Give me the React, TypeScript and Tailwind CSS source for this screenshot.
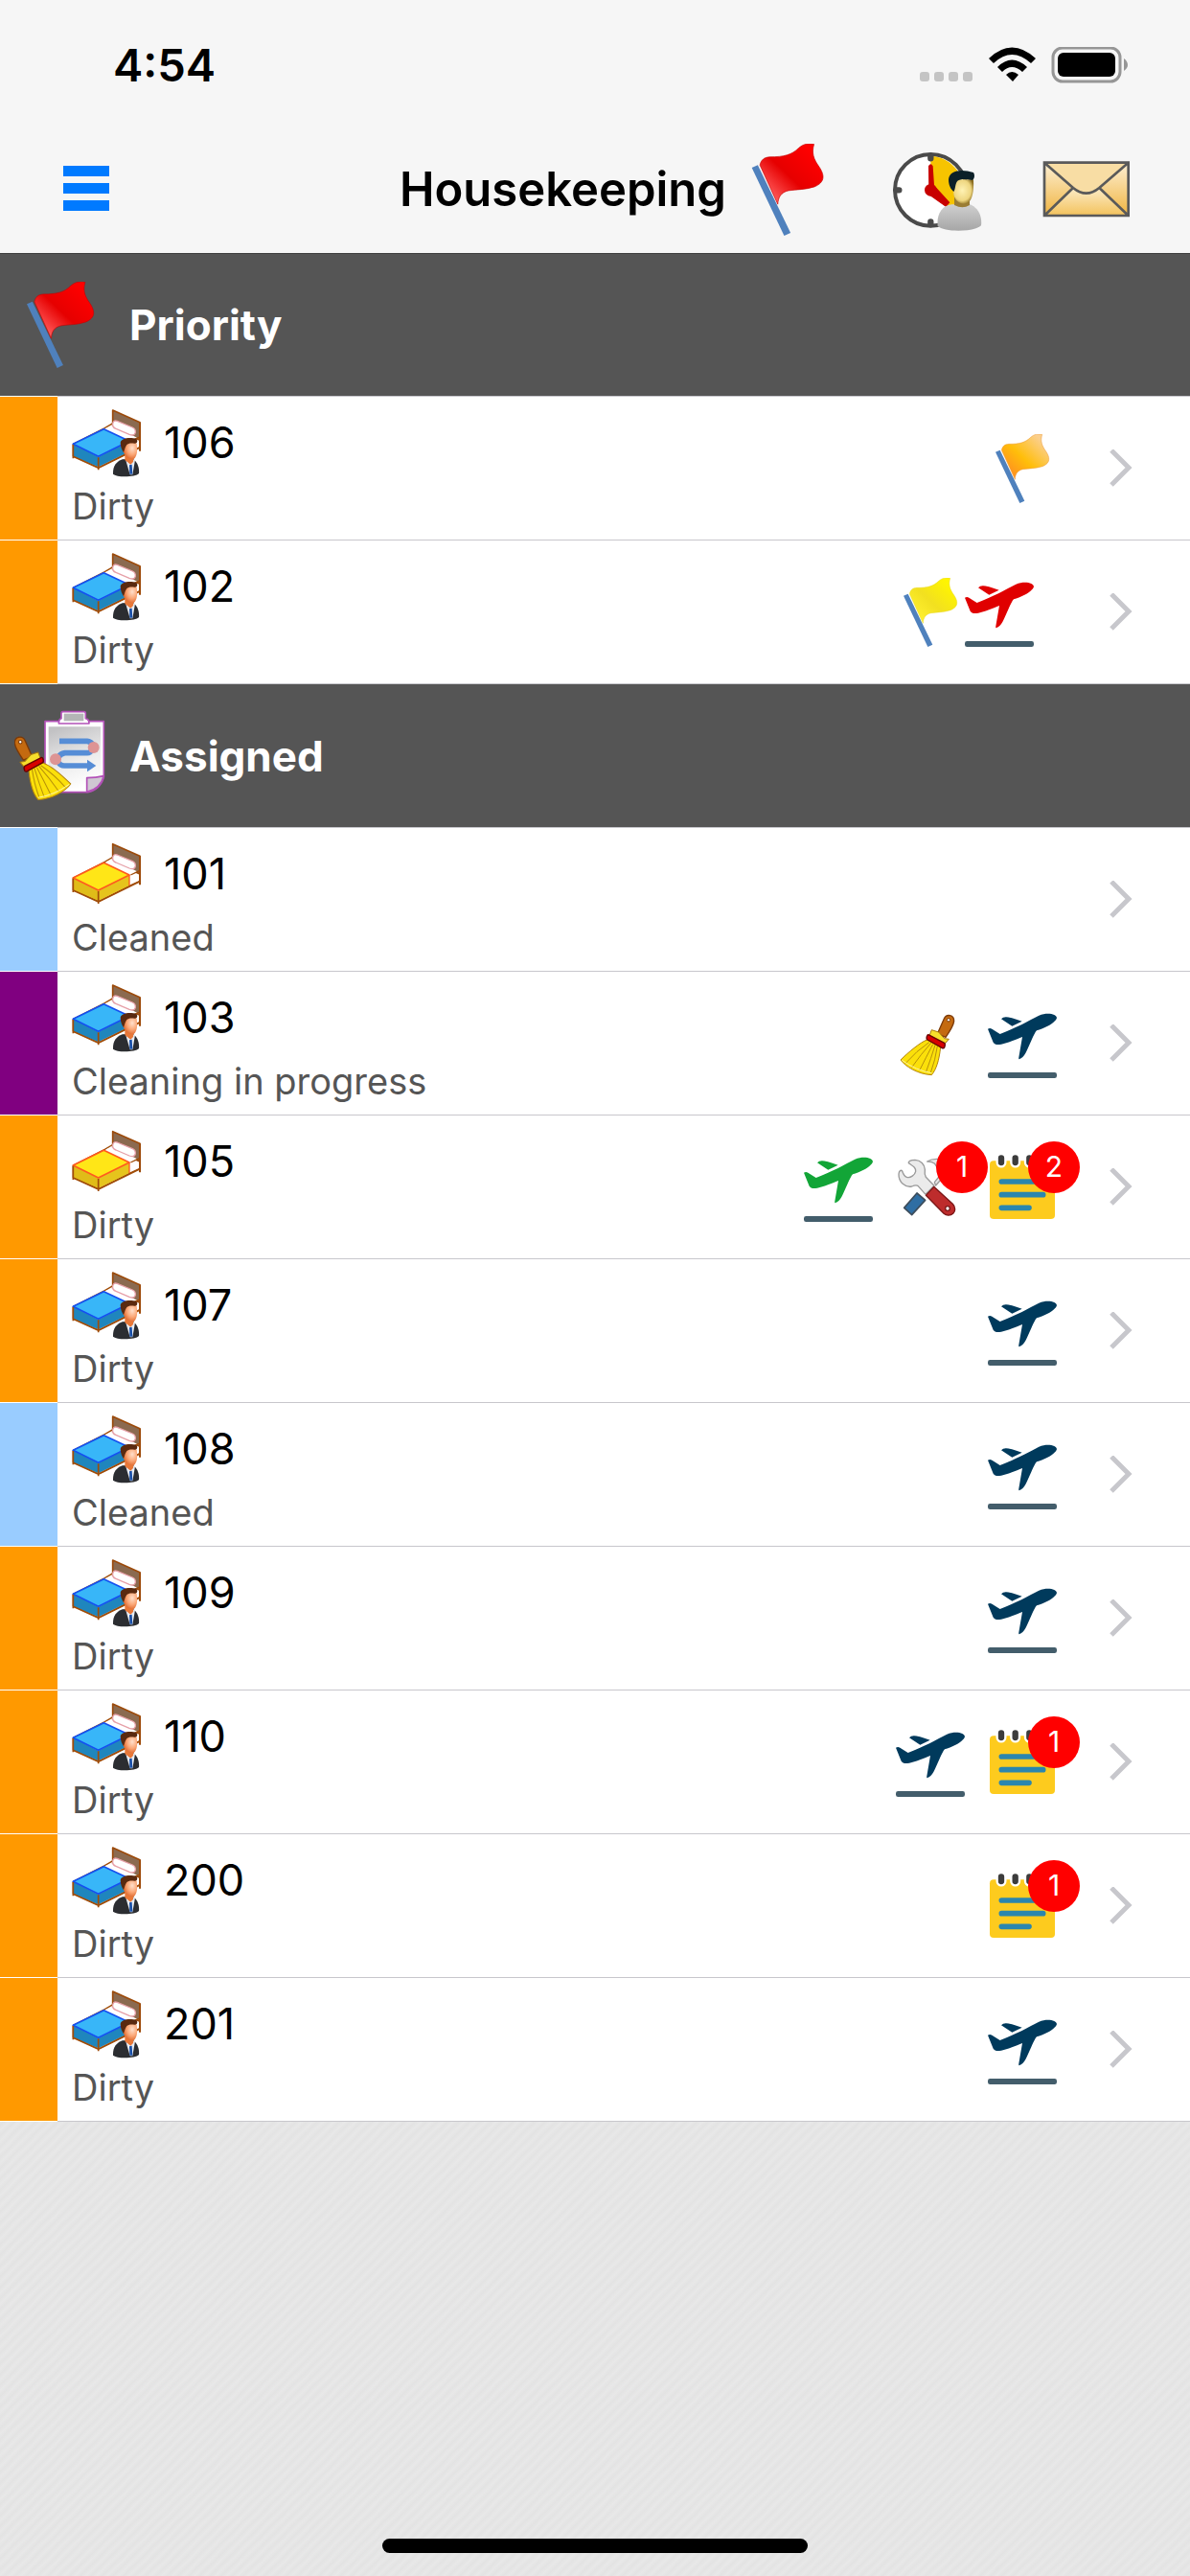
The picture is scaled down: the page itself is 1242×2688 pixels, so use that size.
import type { ReactNode } from 'react';

type FlagColor = 'red' | 'orange' | 'yellow';
type PlaneColor = 'navy' | 'red' | 'green';

type Marker =
  | { kind: 'flag'; color: FlagColor }
  | { kind: 'plane'; color: PlaneColor }
  | { kind: 'broom' }
  | { kind: 'tools'; count: number }
  | { kind: 'note'; count: number };

type Status = 'Dirty' | 'Cleaned' | 'Cleaning in progress';

interface Room {
  number: string;
  status: Status;
  occupied: boolean;
  markers: Marker[];
}

const STATUS_COLORS: Record<Status, string> = {
  Dirty: 'bg-[#ff9900]',
  Cleaned: 'bg-[#99ccff]',
  'Cleaning in progress': 'bg-[#800080]',
};

const priorityRooms: Room[] = [
  { number: '106', status: 'Dirty', occupied: true, markers: [{ kind: 'flag', color: 'orange' }] },
  {
    number: '102',
    status: 'Dirty',
    occupied: true,
    markers: [
      { kind: 'flag', color: 'yellow' },
      { kind: 'plane', color: 'red' },
    ],
  },
];

const assignedRooms: Room[] = [
  { number: '101', status: 'Cleaned', occupied: false, markers: [] },
  {
    number: '103',
    status: 'Cleaning in progress',
    occupied: true,
    markers: [{ kind: 'broom' }, { kind: 'plane', color: 'navy' }],
  },
  {
    number: '105',
    status: 'Dirty',
    occupied: false,
    markers: [
      { kind: 'plane', color: 'green' },
      { kind: 'tools', count: 1 },
      { kind: 'note', count: 2 },
    ],
  },
  { number: '107', status: 'Dirty', occupied: true, markers: [{ kind: 'plane', color: 'navy' }] },
  { number: '108', status: 'Cleaned', occupied: true, markers: [{ kind: 'plane', color: 'navy' }] },
  { number: '109', status: 'Dirty', occupied: true, markers: [{ kind: 'plane', color: 'navy' }] },
  {
    number: '110',
    status: 'Dirty',
    occupied: true,
    markers: [
      { kind: 'plane', color: 'navy' },
      { kind: 'note', count: 1 },
    ],
  },
  { number: '200', status: 'Dirty', occupied: true, markers: [{ kind: 'note', count: 1 }] },
  { number: '201', status: 'Dirty', occupied: true, markers: [{ kind: 'plane', color: 'navy' }] },
];

const FLAG_STOPS: Record<FlagColor, [string, string, string, string]> = {
  red: ['#ff5a5a', '#e60000', '#ff0000', '#c80000'],
  orange: ['#ff9020', '#ffbe0a', '#fbcf8c', '#eb9a3c'],
  yellow: ['#fff030', '#f2e020', '#fff500', '#e8d820'],
};

function FlagIcon({ color, className }: { color: FlagColor; className: string }) {
  const [from, mid, to, edge] = FLAG_STOPS[color];
  return (
    <svg viewBox="0 0 216 216" className={className} aria-hidden="true">
      <defs>
        <linearGradient id={`flag-${color}`} x1="0.1" y1="0.8" x2="0.8" y2="0.1">
          <stop offset="0" stopColor={from} />
          <stop offset="0.45" stopColor={mid} />
          <stop offset="1" stopColor={to} />
        </linearGradient>
      </defs>
      <path
        d="M43 50C46 38 52 32 66 31C100 31 118 26 134 10C146 0 155 -1 170 1C164 22 169 36 182 54C194 72 198 90 171 101C150 108 130 107 110 110C92 114 86 126 85 142Z"
        fill={`url(#flag-${color})`}
        stroke={edge}
        strokeWidth="1.5"
      />
      <path d="M24 56L38 50L115 209L100 216Z" fill="#4f81bd" />
    </svg>
  );
}

const PLANE_FILLS: Record<PlaneColor, string> = {
  navy: '#003a5c',
  red: '#e00000',
  green: '#12a537',
};

function PlaneIcon({ color }: { color: PlaneColor }) {
  return (
    <svg viewBox="0 0 216 216" className="size-[72px]" aria-hidden="true">
      <g fill={PLANE_FILLS[color]}>
        <path d="M0 62C5 59 9 60 13 62L38 78C90 58 125 38 160 20C178 13 196 13 208 18C218 23 218 30 210 37C200 49 174 61 153 67C144 76 130 116 118 138C112 149 107 153 98 157Q96 156 97 151L108 87C82 98 64 105 42 110C30 112 22 112 17 104Z" />
        <path d="M42 31Q47 25 56 25Q66 24 107 38L76 53Z" />
      </g>
      <rect y="198" width="216" height="18" rx="7" fill="#435d6b" />
    </svg>
  );
}

function BroomShape() {
  return (
    <g strokeLinejoin="round">
      <path
        d="M130 77L151 30C158 14 183 16 182 38C181 46 170 68 156 88Z"
        fill="#c46a10"
        stroke="#7c3a08"
        strokeWidth="4"
      />
      <circle cx="165" cy="34" r="5" fill="#fff" stroke="#7c3a08" strokeWidth="3" />
      <path d="M112 65L134 72L152 92L166 94L150 112L104 86Z" fill="#f7de2c" stroke="#a8780c" strokeWidth="3" />
      <path
        d="M98 96C76 104 38 136 15 159C30 180 70 204 112 206C126 190 136 160 140 118Z"
        fill="#fbe00a"
        stroke="#b5850c"
        strokeWidth="3"
      />
      <path
        d="M104 104Q65 130 30 170M110 106Q78 142 50 182M116 110Q95 150 74 192M123 112Q110 155 94 198M130 116Q124 158 108 202"
        fill="none"
        stroke="#b8920a"
        strokeWidth="3"
      />
      <path d="M19 160Q64 192 112 200" fill="none" stroke="#fff6a0" strokeWidth="3" />
      <path d="M98 83Q100 78 106 82L152 106Q156 110 152 120Q149 124 144 121L99 96Q94 92 98 83Z" fill="#d80000" stroke="#660000" strokeWidth="4" />
    </g>
  );
}

function BroomIcon() {
  return (
    <svg viewBox="0 0 216 216" className="size-[72px]" aria-hidden="true">
      <BroomShape />
    </svg>
  );
}

function ToolsIcon() {
  return (
    <svg viewBox="0 0 216 216" className="size-[72px]" aria-hidden="true">
      <g strokeLinejoin="round">
        <path d="M98 27Q114 17 140 20L170 50L125 102L121 92L142 66L122 34Q112 26 98 27Z" fill="#e8e8e8" stroke="#9a9a9a" strokeWidth="4" />
        <path d="M66 126L92 148L50 194L26 172Z" fill="#2f6ea3" stroke="#3d4d5c" strokeWidth="5" />
        <path
          d="M40 32C38 27 46 22 60 22C78 23 90 36 91 52Q89 66 94 76L120 103L93 130L69 103Q62 100 50 105C30 109 8 92 9 66C10 56 16 52 20 57C23 66 26 74 34 76C46 80 60 68 62 58C63 46 54 42 40 32Z"
          fill="#ebebeb"
          stroke="#9a9a9a"
          strokeWidth="4"
        />
        <path d="M119 106L178 160C188 170 186 184 180 189C171 198 158 197 150 190L94 133Z" fill="#bd2c2c" stroke="#7a1616" strokeWidth="4" />
        <circle cx="162" cy="174" r="7" fill="#fff" stroke="#7a1616" strokeWidth="4" />
      </g>
    </svg>
  );
}

function NoteIcon() {
  return (
    <svg viewBox="0 0 216 216" className="size-[72px]" aria-hidden="true">
      <rect x="6" y="25" width="204" height="182" rx="12" fill="#fdcb1e" />
      {[42, 86, 130, 174].map((x) => (
        <rect key={x} x={x - 13} y="3" width="26" height="40" rx="13" fill="#3c3c3c" stroke="#fff" strokeWidth="7" />
      ))}
      <path d="M43 90H173M43 131H173M43 172H129" stroke="#2b86ae" strokeWidth="17" strokeLinecap="round" />
    </svg>
  );
}

function BedIcon({ occupied }: { occupied: boolean }) {
  const colors = occupied
    ? { top: '#38b6f8', left: '#1f86bd', right: '#1f86bd', edge: '#1450f0' }
    : { top: '#ffe617', left: '#e0bc18', right: '#e6c41c', edge: '#ff5a1e' };
  return (
    <svg viewBox="0 0 216 216" className="size-[72px]" aria-hidden="true">
      <g transform={occupied ? undefined : 'translate(0 8)'} strokeLinejoin="round">
        <path d="M103 62L130 46L213 84V122L180 137L84 186L4 150V112Z" fill="#fff" stroke="#a04c08" strokeWidth="4" />
        <path d="M128 6L213 44V100L128 62Z" fill="#8b6a50" stroke="#9c4a0a" strokeWidth="5" />
        <path d="M213 44V134" stroke="#9c4a0a" strokeWidth="6" />
        <path d="M106 62L130 54L204 92L180 103Z" fill="#fff" />
        <path
          d="M142 40Q130 36 128 48Q126 60 138 64L180 82Q196 88 199 76Q200 64 190 60Z"
          fill="#fff"
          stroke="#e6a0a8"
          strokeWidth="4"
        />
        <path d="M4 112L83 152V184L4 150Z" fill={colors.left} />
        <path d="M83 152L180 103V136L83 184Z" fill={colors.right} />
        <path d="M4 112L100 65L180 103L83 151Z" fill={colors.top} stroke={colors.edge} strokeWidth="5" />
        <path d="M180 103V136" stroke={colors.edge} strokeWidth="4" />
        <path d="M184 103L212 90" stroke="#a04c08" strokeWidth="4" />
        <path d="M4 114V157M83 154V193M4 151L83 187L213 123" fill="none" stroke="#a04c08" strokeWidth="5" />
      </g>
      {occupied && <GuestShape />}
    </svg>
  );
}

function GuestShape() {
  return (
    <g>
      <defs>
        <radialGradient id="guest-face" cx="0.65" cy="0.4" r="0.7">
          <stop offset="0" stopColor="#ffe0cc" />
          <stop offset="0.5" stopColor="#fba878" />
          <stop offset="1" stopColor="#d85a1c" />
        </radialGradient>
      </defs>
      <path d="M129 206C128 182 138 168 158 160L190 158C204 166 212 184 210 204C200 216 140 217 129 206Z" fill="#2b2d31" />
      <path d="M168 160L198 162L190 208H182Z" fill="#e8eef6" />
      <path d="M180 178L188 176L190 206L181 206Z" fill="#1a50a8" />
      <path d="M166 140L194 150L192 168L184 176L166 162Z" fill="#e87838" />
      <path d="M160 108C176 98 200 100 203 112C206 130 205 150 194 159C178 162 166 148 160 134Z" fill="url(#guest-face)" />
      <path d="M152 108C154 92 184 90 202 96C208 101 204 112 196 110C184 108 176 110 172 114C166 122 166 128 162 138C156 130 153 122 152 108Z" fill="#5a2a10" />
    </g>
  );
}

function ClipboardIcon() {
  return (
    <svg viewBox="0 0 288 288" className="size-24" aria-hidden="true">
      <defs>
        <linearGradient id="clipboard-paper" x1="0.3" y1="0" x2="0.6" y2="1">
          <stop offset="0" stopColor="#c2c2c4" />
          <stop offset="0.6" stopColor="#eeeeee" />
          <stop offset="1" stopColor="#ffffff" />
        </linearGradient>
      </defs>
      <g strokeLinejoin="round">
        <path d="M96 35H280V210Q268 250 230 257H96Z" fill="#fff" stroke="#b351b8" strokeWidth="5" />
        <path d="M107 52H270V206L227 212V247H107Z" fill="url(#clipboard-paper)" />
        <path d="M227 256V212Q256 212 280 206Q270 246 227 256Z" fill="#cfc8d2" stroke="#b351b8" strokeWidth="5" />
        <path d="M147 10Q147 5 152 5H218Q223 5 223 10V26Q234 28 234 42H139Q139 28 147 26Z" fill="#fff" stroke="#b351b8" strokeWidth="5" />
        <path d="M155 11H217V34H155Z" fill="#b4b6b6" />
        <path
          d="M141 97H228Q240 98 250 112M240 126Q238 134 228 134H158Q144 136 136 150M138 164Q144 174 156 174H232"
          fill="none"
          stroke="#568dd6"
          strokeWidth="17"
        />
        <path d="M228 155L256 174L228 193Z" fill="#568dd6" />
        <circle cx="248" cy="117" r="18" fill="#dd9494" />
        <circle cx="129" cy="154" r="18" fill="#dd9494" />
      </g>
      <g transform="translate(192 64) scale(-1.05 1.05)">
        <BroomShape />
      </g>
    </svg>
  );
}

function ClockPersonIcon() {
  return (
    <svg viewBox="0 0 288 288" className="size-24" aria-hidden="true">
      <defs>
        <linearGradient id="shirt" x1="0" y1="0" x2="0" y2="1">
          <stop offset="0" stopColor="#cfcfcf" />
          <stop offset="1" stopColor="#a6a6a6" />
        </linearGradient>
        <radialGradient id="clerk-face" cx="0.45" cy="0.45" r="0.6">
          <stop offset="0" stopColor="#fff2b4" />
          <stop offset="0.7" stopColor="#eed680" />
          <stop offset="1" stopColor="#8a6c20" />
        </radialGradient>
      </defs>
      <circle cx="124" cy="145" r="112" fill="#fff" stroke="#4a4a4a" strokeWidth="12" />
      <path d="M124 145V38C160 40 190 58 208 84L214 214C206 214 200 218 196 216Z" fill="#f7c400" />
      <path d="M124 38V46M17 145H25M124 244V252" stroke="#4a4a4a" strokeWidth="19" strokeLinecap="round" />
      <path d="M117 70Q124 58 131 70L135 130L184 184L172 198L118 160Z" fill="#c80000" />
      <circle cx="124" cy="145" r="19" fill="#c80000" />
      <path d="M146 258C142 222 158 194 190 190H246C272 198 286 226 282 256C264 276 166 278 146 258Z" fill="url(#shirt)" />
      <path d="M198 168L246 174V192Q224 206 198 192Z" fill="#9a7c34" />
      <path d="M194 112H258C260 150 254 176 240 186C222 192 202 184 196 160Z" fill="url(#clerk-face)" />
      <path d="M180 112C182 82 222 78 258 90C264 100 260 112 254 114C236 110 216 110 208 116C200 126 202 142 196 150C186 142 180 128 180 112Z" fill="#0c2028" />
    </svg>
  );
}

function EnvelopeIcon() {
  return (
    <svg viewBox="0 0 288 288" className="size-24" aria-hidden="true">
      <defs>
        <linearGradient id="envelope" x1="0" y1="0" x2="0" y2="1">
          <stop offset="0" stopColor="#fdf0d4" />
          <stop offset="1" stopColor="#f0b440" />
        </linearGradient>
        <linearGradient id="envelope-front" x1="0" y1="0" x2="0" y2="1">
          <stop offset="0" stopColor="#fcecc8" />
          <stop offset="1" stopColor="#f3c25c" />
        </linearGradient>
      </defs>
      <path d="M12 59H275V225H12Z" fill="url(#envelope)" />
      <path d="M12 225L102 138H184L275 225Z" fill="url(#envelope-front)" />
      <path d="M12 59L102 138Q143 172 184 138L275 59Z" fill="#f8dda4" />
      <path
        d="M12 59H275V225H12ZL102 138Q143 172 184 138L275 59M12 225L102 138M275 225L184 138"
        fill="none"
        stroke="#5a5a5a"
        strokeWidth="8"
      />
    </svg>
  );
}

function Badge({ count, children }: { count: number; children: ReactNode }) {
  return (
    <div className="relative">
      {children}
      <span className="absolute -top-3 -right-6 flex size-[54px] items-center justify-center rounded-full bg-[#ff0000] text-[30px] text-white">
        {count}
      </span>
    </div>
  );
}

function MarkerIcon({ marker }: { marker: Marker }) {
  switch (marker.kind) {
    case 'flag':
      return <FlagIcon color={marker.color} className="size-[72px]" />;
    case 'plane':
      return <PlaneIcon color={marker.color} />;
    case 'broom':
      return <BroomIcon />;
    case 'tools':
      return (
        <Badge count={marker.count}>
          <ToolsIcon />
        </Badge>
      );
    case 'note':
      return (
        <Badge count={marker.count}>
          <NoteIcon />
        </Badge>
      );
  }
}

function RoomRow({ room }: { room: Room }) {
  // a flag sits directly against the icon that follows it
  const flagged = room.markers.length > 1 && room.markers[0].kind === 'flag';

  return (
    <li>
      <a href={`#room-${room.number}`} className="flex h-[150px] bg-white">
        <span className={`h-[149px] w-[60px] shrink-0 ${STATUS_COLORS[room.status]}`} />
        <span className="flex flex-1 items-center border-b border-[#c8c7cc] pr-[60px] pl-[15px]">
          <span className="flex flex-1 flex-col self-stretch pt-3">
            <span className="flex items-center gap-6">
              <BedIcon occupied={room.occupied} />
              <span className="text-[45px] leading-[72px] text-black">{room.number}</span>
            </span>
            <span className="text-[38px] leading-[60px] text-[#555555]">{room.status}</span>
          </span>
          <span className={flagged ? 'flex pr-6' : 'flex gap-6'}>
            {room.markers.map((marker, idx) => (
              <MarkerIcon key={idx} marker={marker} />
            ))}
          </span>
          <svg viewBox="0 0 24 40" className="ml-[55px] h-10 w-6" aria-hidden="true">
            <path d="M2 1L20 19L2 37" fill="none" stroke="#c7c7cc" strokeWidth="5" />
          </svg>
        </span>
      </a>
    </li>
  );
}

function Section({ title, icon, rooms }: { title: string; icon: ReactNode; rooms: Room[] }) {
  return (
    <section className="bg-white">
      <h2 className="flex h-[149px] items-center gap-6 bg-[#555555] pl-[15px] text-[44px] font-bold text-white">
        <span className="flex w-24 justify-center">{icon}</span>
        {title}
      </h2>
      <div className="ml-[60px] h-px bg-[#c8c7cc]" />
      <ul>
        {rooms.map((room) => (
          <RoomRow key={room.number} room={room} />
        ))}
      </ul>
    </section>
  );
}

function StatusBar() {
  return (
    <div className="flex h-[132px] items-center justify-between pt-1 pr-[64px] pl-[118px]">
      <span className="text-[47px] font-semibold">4:54</span>
      <svg viewBox="0 0 218 38" className="h-[38px] w-[218px]" aria-hidden="true">
        {[0, 15, 30, 45].map((x) => (
          <rect key={x} x={x} y="26" width="10" height="10" rx="3" fill="#c4c4c4" />
        ))}
        <path d="M72 12Q96 -11 121 12L116 17Q96 -1 77 17Z" />
        <path d="M81 21Q96 6 112 21L107 26Q96 16 86 26Z" />
        <path d="M90 29Q96 23 103 29L97 36Z" />
        <rect x="139" y="1" width="70" height="35" rx="10" fill="none" stroke="#969696" strokeWidth="3" />
        <rect x="144" y="6" width="60" height="25" rx="6" />
        <path d="M213 12Q217 15 217 19Q217 22 213 25Z" fill="#969696" />
      </svg>
    </div>
  );
}

function NavBar() {
  return (
    <div className="flex h-[132px] items-center pr-[60px] pl-[66px]">
      <button type="button" aria-label="Menu" className="flex flex-col gap-[7px] pb-1">
        <span className="h-[11px] w-12 bg-[#007aff]" />
        <span className="h-[11px] w-12 bg-[#007aff]" />
        <span className="h-[11px] w-12 bg-[#007aff]" />
      </button>
      <h1 className="mr-4 ml-auto text-[49px] font-semibold">Housekeeping</h1>
      <div className="flex gap-[60px]">
        <button type="button" aria-label="Priority rooms">
          <FlagIcon color="red" className="size-24" />
        </button>
        <button type="button" aria-label="Staff schedule">
          <ClockPersonIcon />
        </button>
        <button type="button" aria-label="Messages">
          <EnvelopeIcon />
        </button>
      </div>
    </div>
  );
}

export default function App() {
  return (
    <div className="flex min-h-screen flex-col bg-[repeating-linear-gradient(135deg,#e3e3e3_0px,#e8e8e8_4px,#e3e3e3_8px)] font-['Inter','Liberation_Sans',sans-serif] text-black">
      <header className="relative bg-[#f6f6f6] shadow-[0_1px_0_#3f3f3f]">
        <StatusBar />
        <NavBar />
      </header>
      <main>
        <Section title="Priority" icon={<FlagIcon color="red" className="size-[90px]" />} rooms={priorityRooms} />
        <Section title="Assigned" icon={<ClipboardIcon />} rooms={assignedRooms} />
      </main>
      <div className="mx-auto mt-auto mb-6 h-[15px] w-[444px] rounded-full bg-black" />
    </div>
  );
}
